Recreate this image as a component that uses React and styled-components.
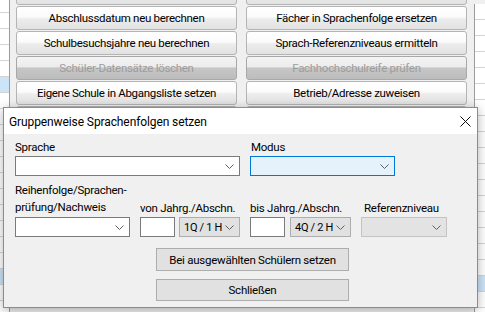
import styled, { createGlobalStyle, css } from "styled-components";

const Global = createGlobalStyle`
  html, body { margin: 0; padding: 0; background: #f0f0f0; }
  body { font-family: Roboto, "Noto Sans", sans-serif; font-size: 12px; color: #000; }
`;

const Screen = styled.div`
  position: relative;
  width: 485px;
  height: 312px;
  overflow: hidden;
  background: #f0f0f0;
  display: flex;
`;

const Table = styled.div`
  width: 9px;
  background: #fff;
  border-right: 1px solid #9c9c9c;
  display: flex;
  flex-direction: column;
  margin-top: -3px;
`;

const TableRow = styled.div`
  height: 16px;
  flex: none;
  border-bottom: 1px solid #d4d4d4;
  box-sizing: border-box;
  background: ${(p) => (p.$selected ? "#cce4f7" : "transparent")};
`;

const ButtonGrid = styled.div`
  margin: -19px 0 0 6px;
  display: grid;
  grid-template-columns: 221px 221px;
  grid-auto-rows: 24px;
  column-gap: 9px;
  row-gap: 1px;
  align-content: start;
`;

const AppButton = styled.div`
  box-sizing: border-box;
  border: 1px solid #b4b4b4;
  border-radius: 3px;
  display: flex;
  align-items: center;
  justify-content: center;
  font-size: 11.5px;
  letter-spacing: -0.3px;
  white-space: nowrap;
  background: linear-gradient(#ffffff, #fbfbfb 45%, #ececec 55%, #e2e2e2);
  color: #000;
  ${(p) =>
    p.$disabled &&
    css`
      color: #9d9d9d;
      border-color: #a8a8a8;
      background: linear-gradient(#f4f4f4, #ececec 45%, #c6c6c6 50%, #bdbdbd);
    `}
`;

const SideStrip = styled.div`
  margin-left: 7px;
  flex: 1;
  background: #fff;
  border-left: 1px solid #9c9c9c;
  display: flex;
  flex-direction: column;
  margin-top: 4px;
`;

const Dialog = styled.div`
  position: absolute;
  left: 3px;
  top: 107px;
  width: 475px;
  height: 201px;
  box-sizing: border-box;
  border: 1px solid #8c8c8c;
  background: #f0f0f0;
  box-shadow: 0 2px 10px rgba(0, 0, 0, 0.3);
  display: flex;
  flex-direction: column;
`;

const TitleBar = styled.div`
  height: 25px;
  flex: none;
  background: #fff;
  display: flex;
  align-items: center;
  justify-content: space-between;
  padding: 1px 6px 0 5px;
  font-size: 12px;
  letter-spacing: -0.1px;
`;

const Body = styled.div`
  padding: 5px 0 0 11px;
  display: flex;
  flex-direction: column;
`;

const Row = styled.div`
  display: flex;
  align-items: flex-end;
  gap: ${(p) => p.$gap || 10}px;
  margin-top: ${(p) => p.$top || 0}px;
`;

const Field = styled.div`
  display: flex;
  flex-direction: column;
  width: ${(p) => p.$w}px;
`;

const Label = styled.div`
  font-size: 11.5px;
  letter-spacing: -0.25px;
  line-height: ${(p) => p.$lh || 16}px;
  padding-left: ${(p) => p.$indent || 0}px;
  margin-bottom: 1px;
  white-space: nowrap;
`;

const Controls = styled.div`
  display: flex;
  gap: ${(p) => p.$gap || 4}px;
`;

const comboLook = {
  edit: css`
    background: #fff;
    border-color: #7a7a7a;
  `,
  focus: css`
    background: #e5f1fb;
    border-color: #0078d7;
  `,
  list: css`
    background: #e1e1e1;
    border-color: #adadad;
  `,
  disabled: css`
    background: #e3e3e3;
    border-color: #c4c4c4;
  `,
};

const Combo = styled.div`
  box-sizing: border-box;
  width: ${(p) => p.$w}px;
  height: 20px;
  border: 1px solid;
  display: flex;
  align-items: center;
  gap: 3px;
  padding: 0 5px 0 4px;
  ${(p) => comboLook[p.$look || "edit"]}
`;

const ComboText = styled.span`
  flex: 1;
  min-width: 0;
  overflow: hidden;
  white-space: nowrap;
  font-size: 11px;
  letter-spacing: -0.3px;
`;

const TextBox = styled.div`
  box-sizing: border-box;
  width: 35px;
  height: 20px;
  background: #fff;
  border: 1px solid #7a7a7a;
`;

const DialogButton = styled.div`
  box-sizing: border-box;
  width: 193px;
  height: ${(p) => p.$h || 23}px;
  margin: ${(p) => p.$top}px 0 0 141px;
  background: #e1e1e1;
  border: 1px solid #adadad;
  display: flex;
  align-items: center;
  justify-content: center;
  font-size: 11.5px;
  letter-spacing: -0.25px;
  white-space: nowrap;
`;

const Chevron = () => (
  <svg width="9" height="5" viewBox="0 0 9 5" style={{ flex: "none" }}>
    <path d="M0.5 0.5 L4.5 4.5 L8.5 0.5" fill="none" stroke="#606060" strokeWidth="1" />
  </svg>
);

const CloseIcon = () => (
  <svg width="11" height="11" viewBox="0 0 11 11">
    <path d="M0.5 0.5 L10.5 10.5 M10.5 0.5 L0.5 10.5" stroke="#111" strokeWidth="1" fill="none" />
  </svg>
);

const buttons = [
  ["", ""],
  ["Abschlussdatum neu berechnen", "Fächer in Sprachenfolge ersetzen"],
  ["Schulbesuchsjahre neu berechnen", "Sprach-Referenzniveaus ermitteln"],
  ["Schüler-Datensätze löschen", "Fachhochschulreife prüfen", true],
  ["Eigene Schule in Abgangsliste setzen", "Betrieb/Adresse zuweisen"],
  ["", ""],
];

const rows = Array.from({ length: 20 }, (_, i) => i);

export default function App() {
  return (
    <>
      <Global />
      <Screen>
        <Table>
          {rows.map((i) => (
            <TableRow key={i} $selected={i === 5 || i === 17} />
          ))}
        </Table>
        <ButtonGrid>
          {buttons.flatMap(([a, b, dis], i) => [
            <AppButton key={i + "a"} $disabled={dis}>{a}</AppButton>,
            <AppButton key={i + "b"} $disabled={dis}>{b}</AppButton>,
          ])}
        </ButtonGrid>
        <SideStrip>
          {rows.map((i) => (
            <TableRow key={i} $selected={i === 17} />
          ))}
        </SideStrip>

        <Dialog>
          <TitleBar>
            <span>Gruppenweise Sprachenfolgen setzen</span>
            <CloseIcon />
          </TitleBar>
          <Body>
            <Row>
              <Field $w={225}>
                <Label>Sprache</Label>
                <Combo $w={225}>
                  <ComboText />
                  <Chevron />
                </Combo>
              </Field>
              <Field $w={145}>
                <Label $indent={1}>Modus</Label>
                <Combo $w={145} $look="focus">
                  <ComboText />
                  <Chevron />
                </Combo>
              </Field>
            </Row>
            <Row $top={6}>
              <Field $w={115}>
                <Label $lh={17}>
                  Reihenfolge/Sprachen-
                  <br />
                  prüfung/Nachweis
                </Label>
                <Combo $w={115}>
                  <ComboText />
                  <Chevron />
                </Combo>
              </Field>
              <Field $w={100}>
                <Label>von Jahrg./Abschn.</Label>
                <Controls $gap={4}>
                  <TextBox />
                  <Combo $w={61} $look="list">
                    <ComboText>1Q / 1 H</ComboText>
                    <Chevron />
                  </Combo>
                </Controls>
              </Field>
              <Field $w={101}>
                <Label>bis Jahrg./Abschn.</Label>
                <Controls $gap={5}>
                  <TextBox />
                  <Combo $w={61} $look="list">
                    <ComboText>4Q / 2 H</ComboText>
                    <Chevron />
                  </Combo>
                </Controls>
              </Field>
              <Field $w={86}>
                <Label $indent={3}>Referenzniveau</Label>
                <Combo $w={86} $look="disabled">
                  <ComboText />
                  <Chevron />
                </Combo>
              </Field>
            </Row>
            <DialogButton $top={11}>Bei ausgewählten Schülern setzen</DialogButton>
            <DialogButton $top={8} $h={22}>Schließen</DialogButton>
          </Body>
        </Dialog>
      </Screen>
    </>
  );
}
